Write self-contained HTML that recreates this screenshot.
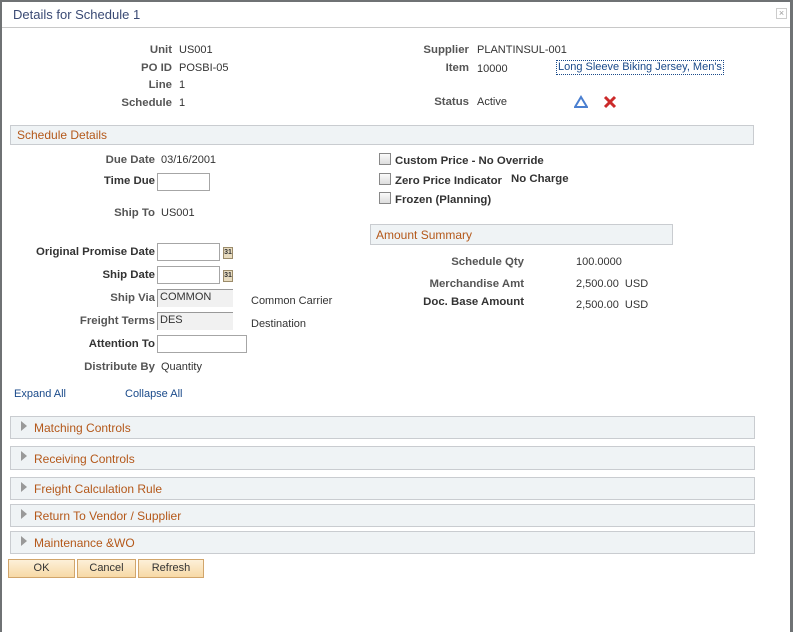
<!DOCTYPE html>
<html><head><style>
body{margin:0;width:793px;height:632px;background:#fff;font-family:"Liberation Sans",Arial,sans-serif;font-size:11px;color:#333;position:relative;overflow:hidden}
.a{position:absolute;white-space:nowrap;line-height:14px}
.l{font-weight:bold;color:#555;text-align:right;font-size:11.4px}
.lb{font-weight:bold;color:#333;text-align:right;font-size:11.4px}
.v{color:#333}
.panel{position:absolute;background:#eff3f5;border:1px solid #c9ccd0;box-sizing:border-box}
.panel span{position:absolute;color:#b4581a;font-size:12px;line-height:14px}
.inp{position:absolute;border:1px solid #a6a6a6;background:#fff;box-sizing:border-box;font-size:11px;line-height:15px;padding-left:2px;color:#333}
.gr{background:#f1f1f1;border-color:#999;border-right:none;border-bottom:none}
.cb{position:absolute;width:12px;height:12px;border:1px solid #888;background:linear-gradient(#fafafa,#ddd);box-sizing:border-box}
.cal{position:absolute;width:10px;height:12px;background:#e8dcc0;border:1px solid #9b8b6a;box-sizing:border-box;font-size:7px;line-height:10px;text-align:center;font-weight:bold;color:#333}
.tri{position:absolute;width:0;height:0;border-top:5px solid transparent;border-bottom:5px solid transparent;border-left:6px solid #999}
.btn{position:absolute;top:559px;height:19px;border:1px solid #d1a56b;background:linear-gradient(#fdf0d8,#f7d9a6);box-sizing:border-box;text-align:center;line-height:17px;color:#333}
</style></head><body>
<div style="position:absolute;left:0;top:0;width:793px;height:2px;background:#6f7274"></div>
<div style="position:absolute;left:0;top:0;width:2px;height:632px;background:#6f7274"></div>
<div style="position:absolute;left:790px;top:0;width:3px;height:632px;background:#6f7274"></div>
<div style="position:absolute;left:2px;top:27px;width:788px;height:1px;background:#c8c8c8"></div>
<div class="a" style="left:13px;top:7px;font-size:13px;line-height:16px;color:#3a4a74">Details for Schedule 1</div>
<div style="position:absolute;left:776px;top:8px;width:11px;height:11px;border:1px solid #ccc;box-sizing:border-box;font-size:9px;line-height:9px;text-align:center;color:#999">×</div>

<div class="a l" style="right:621px;top:43px">Unit</div><div class="a v" style="left:179px;top:43px">US001</div>
<div class="a l" style="right:621px;top:61px">PO ID</div><div class="a v" style="left:179px;top:61px">POSBI-05</div>
<div class="a l" style="right:621px;top:78px">Line</div><div class="a v" style="left:179px;top:78px">1</div>
<div class="a l" style="right:621px;top:96px">Schedule</div><div class="a v" style="left:179px;top:96px">1</div>

<div class="a l" style="right:324px;top:43px">Supplier</div><div class="a v" style="left:477px;top:43px">PLANTINSUL-001</div>
<div class="a l" style="right:324px;top:61px">Item</div><div class="a v" style="left:477px;top:62px">10000</div>
<div class="a" style="left:556px;top:60px;border:1px dotted #1a4a8a;color:#1a4a8a;padding:0 1px;line-height:13px">Long Sleeve Biking Jersey, Men's</div>
<div class="a l" style="right:324px;top:95px">Status</div><div class="a v" style="left:477px;top:95px">Active</div>
<svg style="position:absolute;left:574px;top:95px" width="14" height="14"><path d="M7 2 L13 12 L1 12 Z" fill="none" stroke="#4a7fd0" stroke-width="2"/></svg>
<svg style="position:absolute;left:603px;top:95px" width="14" height="14"><path d="M2 2 L12 12 M12 2 L2 12" stroke="#cc2a2a" stroke-width="3"/></svg>

<div class="panel" style="left:10px;top:125px;width:744px;height:20px"><span style="left:6px;top:2px">Schedule Details</span></div>

<div class="a l" style="right:638px;top:153px">Due Date</div><div class="a v" style="left:161px;top:153px">03/16/2001</div>
<div class="a lb" style="right:638px;top:174px">Time Due</div><div class="inp" style="left:157px;top:173px;width:53px;height:18px"></div>
<div class="a l" style="right:638px;top:206px">Ship To</div><div class="a v" style="left:161px;top:206px">US001</div>
<div class="a lb" style="right:638px;top:245px">Original Promise Date</div><div class="inp" style="left:157px;top:243px;width:63px;height:18px"></div><div class="cal" style="left:223px;top:247px">31</div>
<div class="a lb" style="right:638px;top:268px">Ship Date</div><div class="inp" style="left:157px;top:266px;width:63px;height:18px"></div><div class="cal" style="left:223px;top:270px">31</div>
<div class="a l" style="right:638px;top:291px">Ship Via</div><div class="inp gr" style="left:157px;top:289px;width:76px;height:18px">COMMON</div><div class="a v" style="left:251px;top:294px">Common Carrier</div>
<div class="a l" style="right:638px;top:314px">Freight Terms</div><div class="inp gr" style="left:157px;top:312px;width:76px;height:18px">DES</div><div class="a v" style="left:251px;top:317px">Destination</div>
<div class="a lb" style="right:638px;top:337px">Attention To</div><div class="inp" style="left:157px;top:335px;width:90px;height:18px"></div>
<div class="a l" style="right:638px;top:360px">Distribute By</div><div class="a v" style="left:161px;top:360px">Quantity</div>
<div class="a" style="left:14px;top:387px;color:#1a4a8a">Expand All</div>
<div class="a" style="left:125px;top:387px;color:#1a4a8a">Collapse All</div>

<div class="cb" style="left:379px;top:153px"></div><div class="a lb" style="left:395px;top:154px;text-align:left">Custom Price - No Override</div>
<div class="cb" style="left:379px;top:173px"></div><div class="a lb" style="left:395px;top:174px;text-align:left">Zero Price Indicator</div><div class="a lb" style="left:511px;top:172px;text-align:left">No Charge</div>
<div class="cb" style="left:379px;top:192px"></div><div class="a lb" style="left:395px;top:193px;text-align:left">Frozen (Planning)</div>

<div class="panel" style="left:370px;top:224px;width:303px;height:21px"><span style="left:5px;top:3px">Amount Summary</span></div>
<div class="a l" style="right:269px;top:255px">Schedule Qty</div><div class="a v" style="left:576px;top:255px">100.0000</div>
<div class="a l" style="right:269px;top:277px">Merchandise Amt</div><div class="a v" style="left:576px;top:277px">2,500.00&nbsp; USD</div>
<div class="a lb" style="right:269px;top:295px">Doc. Base Amount</div><div class="a v" style="left:576px;top:298px">2,500.00&nbsp; USD</div>

<div class="panel" style="left:10px;top:416px;width:745px;height:23px"><div class="tri" style="left:10px;top:4px"></div><span style="left:23px;top:4px">Matching Controls</span></div>
<div class="panel" style="left:10px;top:446px;width:745px;height:24px"><div class="tri" style="left:10px;top:4px"></div><span style="left:23px;top:5px">Receiving Controls</span></div>
<div class="panel" style="left:10px;top:477px;width:745px;height:23px"><div class="tri" style="left:10px;top:4px"></div><span style="left:23px;top:4px">Freight Calculation Rule</span></div>
<div class="panel" style="left:10px;top:504px;width:745px;height:23px"><div class="tri" style="left:10px;top:4px"></div><span style="left:23px;top:4px">Return To Vendor / Supplier</span></div>
<div class="panel" style="left:10px;top:531px;width:745px;height:23px"><div class="tri" style="left:10px;top:4px"></div><span style="left:23px;top:4px">Maintenance &amp;WO</span></div>

<div class="btn" style="left:8px;width:67px">OK</div>
<div class="btn" style="left:77px;width:59px">Cancel</div>
<div class="btn" style="left:138px;width:66px">Refresh</div>
</body></html>
